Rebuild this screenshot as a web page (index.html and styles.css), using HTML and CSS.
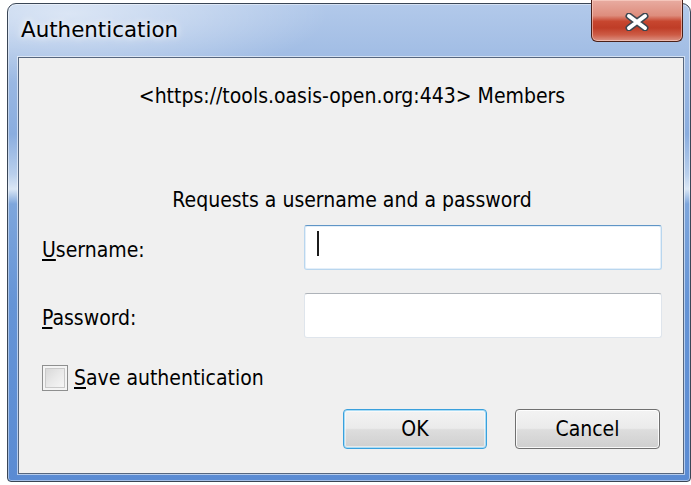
FILE: index.html
```html
<!DOCTYPE html>
<html lang="en">
<head>
<meta charset="utf-8">
<title>Authentication</title>
<link rel="stylesheet" href="styles.css">
</head>
<body>
<div class="window">
  <div class="titlebar">
    <span class="title">Authentication</span>
    <button class="close" type="button" aria-label="Close">
      <svg width="26" height="18" viewBox="0 0 26 18" aria-hidden="true">
        <path d="M5 3 L21 15 M21 3 L5 15" stroke="#3d4650" stroke-width="7" stroke-linecap="round" fill="none"/>
        <path d="M5 3 L21 15 M21 3 L5 15" stroke="#ffffff" stroke-width="4" stroke-linecap="round" fill="none"/>
      </svg>
    </button>
  </div>
  <div class="content">
    <p class="realm">&lt;https://tools.oasis-open.org:443&gt; Members</p>
    <p class="prompt">Requests a username and a password</p>
    <div class="fields">
      <label class="field-label" for="user"><u>U</u>sername:</label>
      <div class="input focused" id="user"><span class="caret"></span></div>
      <label class="field-label" for="pass"><u>P</u>assword:</label>
      <div class="input" id="pass"></div>
    </div>
    <label class="check"><span class="box"></span><span><u>S</u>ave authentication</span></label>
    <div class="actions">
      <button class="btn default" type="button">OK</button>
      <button class="btn" type="button">Cancel</button>
    </div>
  </div>
</div>
</body>
</html>
```
FILE: styles.css
```css
* { box-sizing: border-box; }

html, body {
  margin: 0;
  background: #ffffff;
}

body {
  font-family: "DejaVu Sans Condensed", "Liberation Sans", sans-serif;
  font-size: 21px;
  color: #000;
}

/* Aero-style window frame */
.window {
  margin: 3px 0 0 7px;
  width: 684px;
  height: 479px;
  border: 1px solid #3a4656;
  border-radius: 9px 9px 4px 4px;
  padding: 0 6px 7px 10px;
  display: flex;
  flex-direction: column;
  background:
    radial-gradient(ellipse 260px 70px at 60px 10px, rgba(255,255,255,0.55), rgba(255,255,255,0) 100%),
    linear-gradient(to bottom,
      #b2c9ea 0,
      #a0bce4 55px,
      #8aaddf 130px,
      #b9cfec 170px,
      #dbe7f5 185px,
      #7ea6dc 200px,
      #6594d6 300px,
      #5a8bd3 100%);
  box-shadow: inset 0 0 0 1px rgba(255,255,255,0.45);
}

.titlebar {
  height: 53px;
  display: flex;
  align-items: flex-start;
  justify-content: space-between;
}

.title {
  font-family: "DejaVu Sans", sans-serif;
  font-size: 21.4px;
  line-height: 24px;
  margin: 14px 0 0 3px;
  text-shadow: 0 0 6px rgba(255,255,255,0.9), 0 0 12px rgba(255,255,255,0.7);
}

.close {
  margin: -4px 1px 0 0;
  width: 92px;
  height: 42px;
  padding: 0;
  border: 1px solid #4a2019;
  border-top: none;
  border-radius: 0 0 6px 6px;
  display: flex;
  align-items: center;
  justify-content: center;
  background: linear-gradient(to bottom,
    #e8aca1 0%,
    #de8d7d 38%,
    #c7462f 52%,
    #bf3d27 68%,
    #cd5c46 85%,
    #dc9486 100%);
  box-shadow: inset 0 0 0 1px rgba(255,220,210,0.55);
}

.close svg { display: block; margin-top: 3px; }

/* Dialog client area */
.content {
  flex: 1;
  border: 1px solid #56667e;
  box-shadow: 0 0 0 1px rgba(255,255,255,0.55);
  background: #f0f0f0;
  padding: 0 21px 0 23px;
  display: flex;
  flex-direction: column;
}

.realm,
.prompt {
  margin: 0;
  text-align: center;
  line-height: 24px;
}

.realm { margin-top: 26px; }
.prompt { margin-top: 80px; }

.fields {
  margin-top: 13px;
  display: grid;
  grid-template-columns: 1fr 358px;
  row-gap: 23px;
  align-items: center;
}

.field-label { line-height: 24px; padding-top: 4px; }

.input {
  height: 45px;
  background: #ffffff;
  border: 1px solid #dfe5ec;
  border-top-color: #aeb3b9;
  border-radius: 3px;
  position: relative;
}

.input.focused {
  border-color: #b9d6ee;
  border-top-color: #5f95c6;
  box-shadow: inset 0 0 0 1px #e4eff9;
}

.caret {
  position: absolute;
  left: 12px;
  top: 5px;
  width: 2px;
  height: 25px;
  background: #1c1c1c;
}

.check {
  margin-top: 27px;
  display: flex;
  align-items: center;
  gap: 6px;
  line-height: 24px;
}

.box {
  width: 26px;
  height: 26px;
  border: 1px solid #8e8f8f;
  background: linear-gradient(135deg, #d3d3d3 0%, #e9e9e9 50%, #fafafa 100%);
  box-shadow: inset 0 0 0 2px #f4f4f4, inset 0 0 0 3px #c9c9c9;
}

.actions {
  margin-top: 18px;
  padding-right: 2px;
  display: flex;
  justify-content: flex-end;
  gap: 28px;
}

.btn {
  width: 145px;
  height: 40px;
  font: inherit;
  color: #000;
  padding: 0;
  border: 1px solid #707070;
  border-radius: 4px;
  background: linear-gradient(to bottom, #f3f3f3 0%, #ebebeb 48%, #dddddd 52%, #cfcfcf 100%);
  box-shadow: inset 0 0 0 1px rgba(255,255,255,0.85);
}

.btn.default {
  width: 144px;
  border-color: #3aa0dc;
  box-shadow: inset 0 0 0 1px #a8dcf6, inset 0 0 0 2px rgba(255,255,255,0.5);
}
```
